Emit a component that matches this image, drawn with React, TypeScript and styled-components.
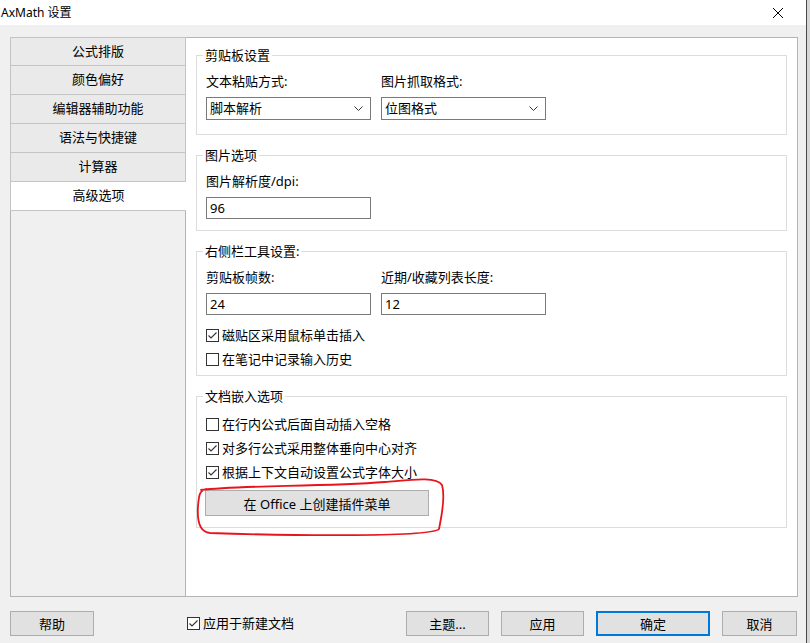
import styled, { createGlobalStyle } from 'styled-components';

const GlobalStyle = createGlobalStyle`
    html, body {
        margin: 0;
        padding: 0;
        background: #d6d6d6;
    }
    body {
        font-family: "Noto Sans", "Noto Sans CJK SC", sans-serif;
        font-size: 13px;
        color: #000;
    }
    * {
        box-sizing: border-box;
    }
`;

const Window = styled.div`
    position: relative;
    width: 807px;
    height: 643px;
    background: #f0f0f0;
    border-right: 1px solid #4a4a4a;
    display: flex;
    flex-direction: column;
`;

const TitleBar = styled.div`
    height: 25px;
    background: #fff;
    display: flex;
    align-items: center;
    justify-content: space-between;
    padding: 0 23px 0 1px;
    font-size: 12px;
    line-height: 25px;
`;

const Body = styled.div`
    padding: 12px 8px 0 10px;
`;

const Panel = styled.div`
    display: flex;
    height: 560px;
`;

const TabList = styled.div`
    width: 176px;
    display: flex;
    flex-direction: column;
`;

const Tab = styled.div<{ $active?: boolean; $first?: boolean }>`
    height: 29px;
    background: ${(p) => (p.$active ? '#fff' : '#eaeaea')};
    border: 1px solid #c4c4c4;
    border-top: ${(p) => (p.$first ? '1px solid #c4c4c4' : 'none')};
    border-right: ${(p) => (p.$active ? 'none' : '1px solid #c4c4c4')};
    text-align: center;
    line-height: 27px;
    font-size: 13px;
`;

const TabFiller = styled.div`
    flex: 1;
    background: #f0f0f0;
    border: 1px solid #b4b4b4;
    border-top: none;
`;

const Content = styled.div`
    flex: 1;
    background: #fff;
    border: 1px solid #b4b4b4;
    border-left: none;
    padding: 9px 10px 0 10px;
    display: flex;
    flex-direction: column;
    gap: 12px;
`;

const Group = styled.fieldset<{ $pb: number }>`
    margin: 0;
    min-width: 0;
    padding: 0 9px ${(p) => p.$pb}px 9px;
    border: 1px solid #dcdcdc;
`;

const Legend = styled.legend`
    padding: 0 2px;
    margin-left: -3px;
    font-size: 13px;
    line-height: 17px;
`;

const FieldRow = styled.div`
    display: flex;
    gap: 10px;
    margin-top: 9px;
`;

const Field = styled.div`
    width: 165px;
    display: flex;
    flex-direction: column;
    gap: 7px;
`;

const Label = styled.div`
    line-height: 17px;
    height: 17px;
    white-space: nowrap;
`;

const Select = styled.div`
    height: 23px;
    border: 1px solid #7a7a7a;
    background: #fff;
    display: flex;
    align-items: center;
    justify-content: space-between;
    padding: 0 7px 0 3px;
    line-height: 21px;
`;

const TextInput = styled.input`
    height: 22px;
    width: 100%;
    border: 1px solid #7a7a7a;
    background: #fff;
    padding: 0 3px;
    margin: 0;
    font: inherit;
    font-size: 13px;
    color: #000;
    outline: none;
`;

const CheckList = styled.div<{ $mt: number }>`
    display: flex;
    flex-direction: column;
    gap: 2px;
    margin-top: ${(p) => p.$mt}px;
`;

const CheckRow = styled.label`
    height: 22px;
    display: flex;
    align-items: center;
    gap: 3px;
    white-space: nowrap;
    line-height: 17px;
`;

const Box = styled.span`
    width: 13px;
    height: 13px;
    border: 1px solid #333;
    background: #fff;
    display: inline-flex;
    align-items: center;
    justify-content: center;
    flex-shrink: 0;
`;

const WideButton = styled.button`
    margin: 7px 0 0 -1px;
    width: 224px;
    height: 26px;
    background: #e1e1e1;
    border: 1px solid #adadad;
    font: inherit;
    font-size: 13px;
    color: #000;
    padding: 0;
`;

const Footer = styled.div`
    flex: 1;
    display: flex;
    align-items: flex-start;
    padding: 14px 9px 0 10px;
`;

const FooterButton = styled.button<{ $w: number; $primary?: boolean }>`
    width: ${(p) => p.$w}px;
    height: 25px;
    background: #e1e1e1;
    border: ${(p) => (p.$primary ? '2px solid #0078d7' : '1px solid #adadad')};
    font: inherit;
    font-size: 13px;
    color: #000;
    padding: 0;
`;

const FooterCheck = styled(CheckRow)`
    height: 25px;
    margin-left: 93px;
`;

const ButtonGroup = styled.div`
    margin-left: auto;
    display: flex;
    gap: 12px;
`;

const Annotation = styled.svg`
    position: absolute;
    left: 0;
    top: 0;
    pointer-events: none;
`;

const Chevron = () => (
    <svg width="9" height="5" viewBox="0 0 9 5">
        <path d="M0.5 0.5 L4.5 4.5 L8.5 0.5" fill="none" stroke="#333" strokeWidth="1" />
    </svg>
);

const Check = ({ checked }: { checked?: boolean }) => (
    <Box>
        {checked && (
            <svg width="11" height="11" viewBox="0 0 11 11">
                <path d="M1.5 5.5 L4 8 L9.5 2.5" fill="none" stroke="#333" strokeWidth="1.1" />
            </svg>
        )}
    </Box>
);

const tabs = ['公式排版', '颜色偏好', '编辑器辅助功能', '语法与快捷键', '计算器', '高级选项'];

export default function App() {
    return (
        <>
            <GlobalStyle />
            <Window>
                <TitleBar>
                    <span>AxMath 设置</span>
                    <svg width="10" height="10" viewBox="0 0 10 10">
                        <path d="M0 0 L10 10 M10 0 L0 10" stroke="#000" strokeWidth="1" />
                    </svg>
                </TitleBar>
                <Body>
                    <Panel>
                        <TabList>
                            {tabs.map((t, i) => (
                                <Tab key={t} $first={i === 0} $active={i === tabs.length - 1}>
                                    {t}
                                </Tab>
                            ))}
                            <TabFiller />
                        </TabList>
                        <Content>
                            <Group $pb={14}>
                                <Legend>剪贴板设置</Legend>
                                <FieldRow>
                                    <Field>
                                        <Label>文本粘贴方式:</Label>
                                        <Select>
                                            <span>脚本解析</span>
                                            <Chevron />
                                        </Select>
                                    </Field>
                                    <Field>
                                        <Label>图片抓取格式:</Label>
                                        <Select>
                                            <span>位图格式</span>
                                            <Chevron />
                                        </Select>
                                    </Field>
                                </FieldRow>
                            </Group>
                            <Group $pb={11}>
                                <Legend>图片选项</Legend>
                                <FieldRow>
                                    <Field>
                                        <Label>图片解析度/dpi:</Label>
                                        <TextInput readOnly value="96" />
                                    </Field>
                                </FieldRow>
                            </Group>
                            <Group $pb={5}>
                                <Legend>右侧栏工具设置:</Legend>
                                <FieldRow>
                                    <Field>
                                        <Label>剪贴板帧数:</Label>
                                        <TextInput readOnly value="24" />
                                    </Field>
                                    <Field>
                                        <Label>近期/收藏列表长度:</Label>
                                        <TextInput readOnly value="12" />
                                    </Field>
                                </FieldRow>
                                <CheckList $mt={9}>
                                    <CheckRow>
                                        <Check checked />
                                        磁贴区采用鼠标单击插入
                                    </CheckRow>
                                    <CheckRow>
                                        <Check />
                                        在笔记中记录输入历史
                                    </CheckRow>
                                </CheckList>
                            </Group>
                            <Group $pb={11}>
                                <Legend>文档嵌入选项</Legend>
                                <CheckList $mt={8}>
                                    <CheckRow>
                                        <Check />
                                        在行内公式后面自动插入空格
                                    </CheckRow>
                                    <CheckRow>
                                        <Check checked />
                                        对多行公式采用整体垂向中心对齐
                                    </CheckRow>
                                    <CheckRow>
                                        <Check checked />
                                        根据上下文自动设置公式字体大小
                                    </CheckRow>
                                </CheckList>
                                <WideButton>在 Office 上创建插件菜单</WideButton>
                            </Group>
                        </Content>
                    </Panel>
                </Body>
                <Footer>
                    <FooterButton $w={84}>帮助</FooterButton>
                    <FooterCheck>
                        <Check checked />
                        应用于新建文档
                    </FooterCheck>
                    <ButtonGroup>
                        <FooterButton $w={83}>主题...</FooterButton>
                        <FooterButton $w={83}>应用</FooterButton>
                        <FooterButton $w={114} $primary>
                            确定
                        </FooterButton>
                        <FooterButton $w={75}>取消</FooterButton>
                    </ButtonGroup>
                </Footer>
                <Annotation width="807" height="643" viewBox="0 0 807 643">
                    <path
                        d="M201 490 C240 485, 320 487, 385 482 C410 480, 436 476, 442 485 C446 498, 441 518, 439 529 C432 537, 300 536, 210 533 C199 532, 197 520, 198 506 C199 496, 199 491, 206 489"
                        fill="none"
                        stroke="#e8141b"
                        strokeWidth="1.8"
                        strokeLinecap="round"
                    />
                </Annotation>
            </Window>
        </>
    );
}
